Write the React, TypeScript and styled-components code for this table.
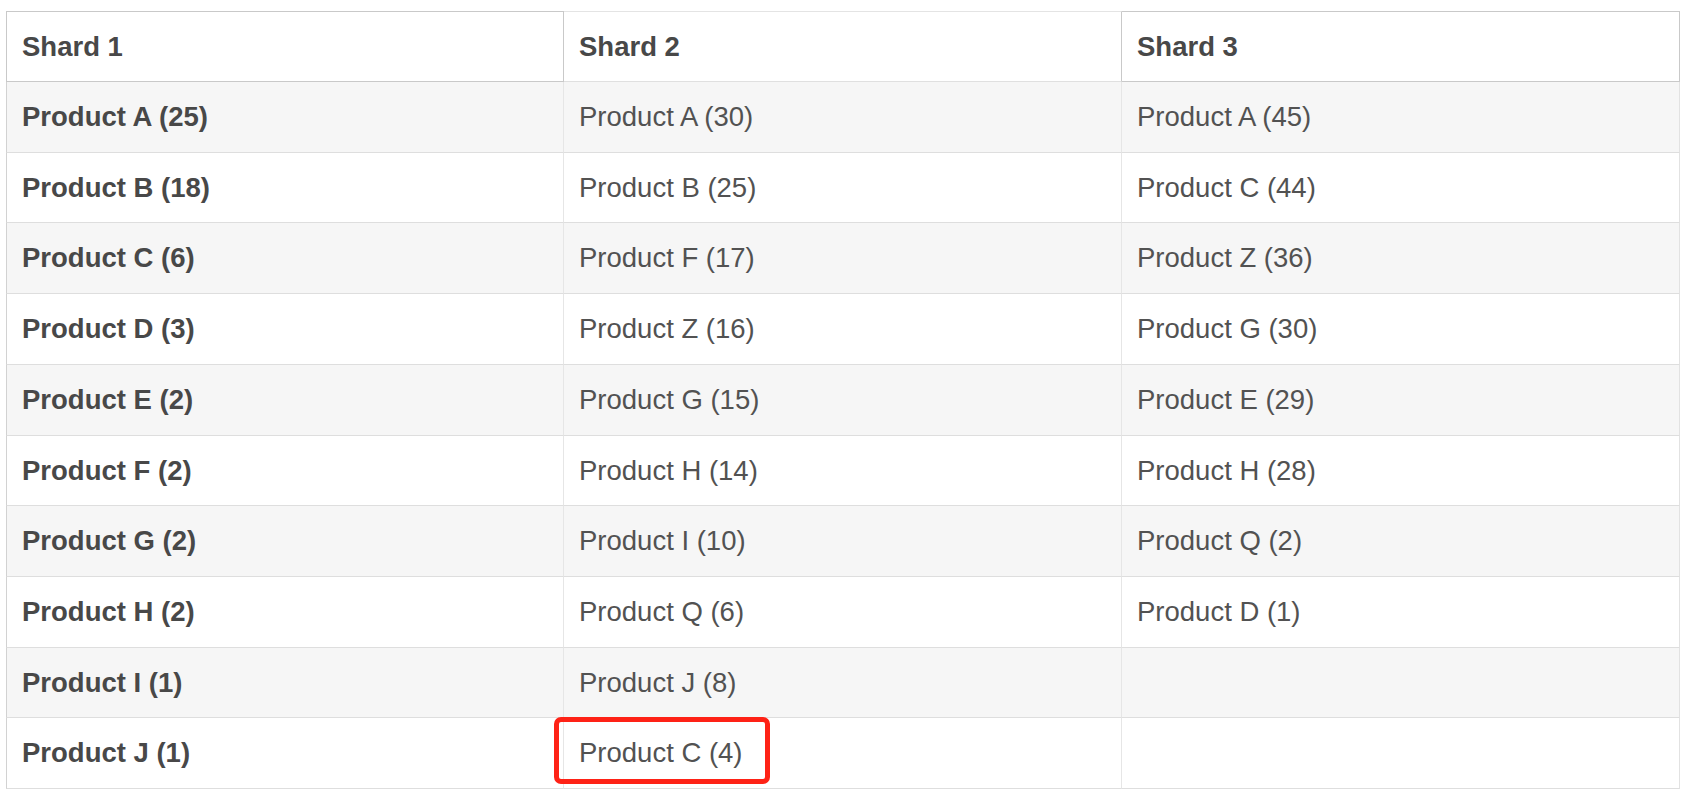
import React from "react";
import styled, { createGlobalStyle } from "styled-components";

const GlobalStyle = createGlobalStyle`
  html, body {
    margin: 0;
    padding: 0;
    background: #ffffff;
  }
  body {
    font-family: "Liberation Sans", Arial, Helvetica, sans-serif;
  }
`;

const Page = styled.div`
  padding: 11px 6px 0 6px;
`;

const Table = styled.table`
  width: 1674px;
  border-collapse: separate;
  border-spacing: 0;
  table-layout: fixed;
  font-family: "Liberation Sans", Arial, Helvetica, sans-serif;
  font-size: 27.5px;
  color: #525252;
`;

const HeadCell = styled.th<{ $dark: boolean; $first?: boolean }>`
  text-align: left;
  font-weight: bold;
  color: #484848;
  padding: 15px 15px;
  line-height: 39px;
  background: #ffffff;
  border-top: 1px solid ${(p) => (p.$dark ? "#c9c9c9" : "#e4e4e4")};
  border-bottom: 1px solid ${(p) => (p.$dark ? "#c9c9c9" : "#e0e0e0")};
  border-right: 1px solid #c9c9c9;
  border-left: ${(p) => (p.$first ? "1px solid #c9c9c9" : "none")};
`;

const Row = styled.tr<{ $striped: boolean }>`
  background: ${(p) => (p.$striped ? "#f6f6f6" : "#ffffff")};
`;

const Cell = styled.td<{ $bold?: boolean; $first?: boolean; $last?: boolean }>`
  position: relative;
  padding: 15px 15px;
  line-height: 39.72px;
  font-weight: ${(p) => (p.$bold ? "bold" : "normal")};
  color: ${(p) => (p.$bold ? "#484848" : "#525252")};
  border-bottom: 1px solid #dedede;
  border-right: 1px solid ${(p) => (p.$last ? "#e2e2e2" : "#e6e6e6")};
  border-left: ${(p) => (p.$first ? "1px solid #d2d2d2" : "none")};
  white-space: nowrap;
`;

const Highlight = styled.span`
  position: absolute;
  left: -10px;
  top: -1px;
  width: 216px;
  height: 67px;
  box-sizing: border-box;
  border: 5px solid #fe2216;
  border-radius: 7px;
  pointer-events: none;
`;

const shard1 = [
  "Product A (25)",
  "Product B (18)",
  "Product C (6)",
  "Product D (3)",
  "Product E (2)",
  "Product F (2)",
  "Product G (2)",
  "Product H (2)",
  "Product I (1)",
  "Product J (1)",
];

const shard2 = [
  "Product A (30)",
  "Product B (25)",
  "Product F (17)",
  "Product Z (16)",
  "Product G (15)",
  "Product H (14)",
  "Product I (10)",
  "Product Q (6)",
  "Product J (8)",
  "Product C (4)",
];

const shard3 = [
  "Product A (45)",
  "Product C (44)",
  "Product Z (36)",
  "Product G (30)",
  "Product E (29)",
  "Product H (28)",
  "Product Q (2)",
  "Product D (1)",
  "",
  "",
];

export default function App() {
  return (
    <>
      <GlobalStyle />
      <Page>
        <Table>
          <thead>
            <tr>
              <HeadCell $dark $first>
                Shard 1
              </HeadCell>
              <HeadCell $dark={false}>Shard 2</HeadCell>
              <HeadCell $dark>Shard 3</HeadCell>
            </tr>
          </thead>
          <tbody>
            {shard1.map((item, i) => (
              <Row key={item} $striped={i % 2 === 0}>
                <Cell $bold $first>
                  {item}
                </Cell>
                <Cell>
                  {shard2[i]}
                  {i === 9 && <Highlight />}
                </Cell>
                <Cell $last>{shard3[i] || "\u00a0"}</Cell>
              </Row>
            ))}
          </tbody>
        </Table>
      </Page>
    </>
  );
}
